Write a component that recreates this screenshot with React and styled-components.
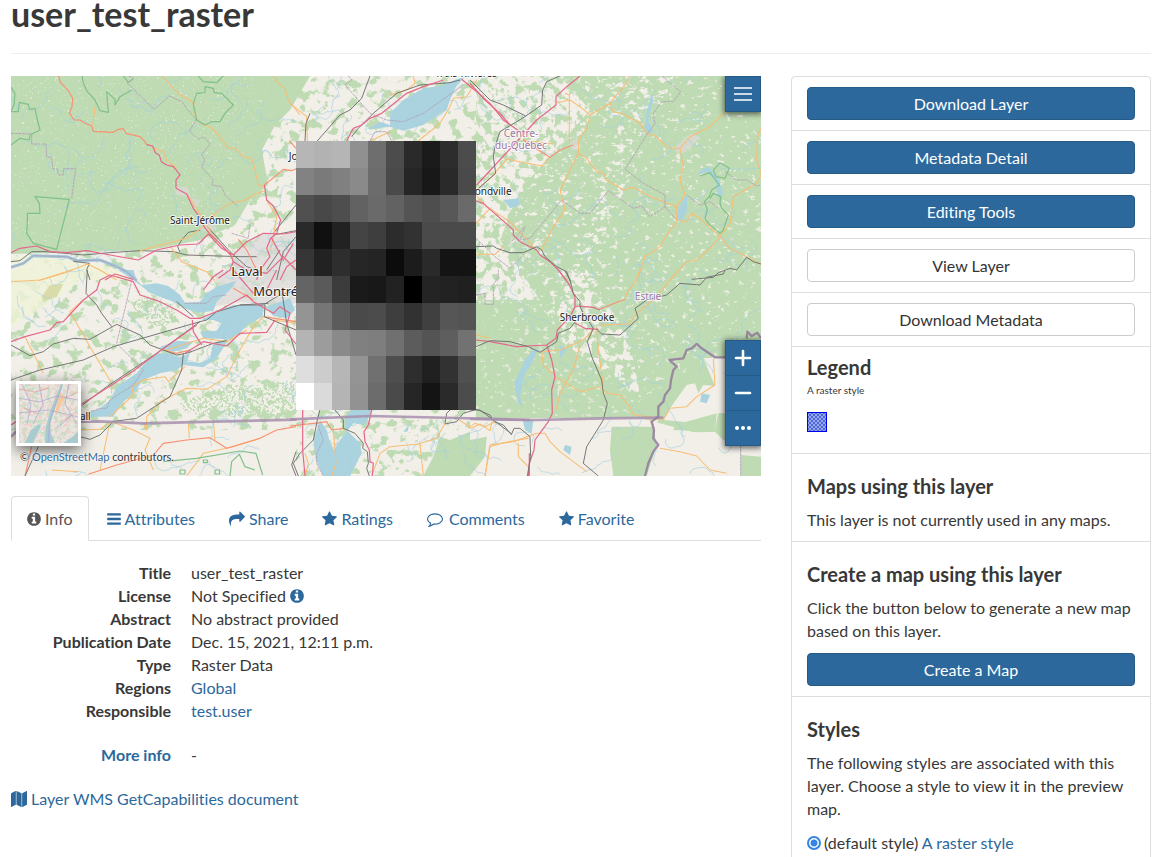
import React from "react";
import styled, { createGlobalStyle, css } from "styled-components";

const GlobalStyle = createGlobalStyle`
  * { box-sizing: border-box; }
  html { overflow: hidden; }
  body {
    margin: 0;
    background: #fff;
    color: #383838;
    font-family: Lato, "Liberation Sans", sans-serif;
    font-size: 16px;
    line-height: 23px;
    font-variant-ligatures: none;
  }
`;

const link = css`
  color: #2c689c;
  text-decoration: none;
  &:hover { text-decoration: underline; }
`;

const Page = styled.div`
  height: 100vh;
  overflow: hidden auto;
  scrollbar-width: none;
  padding: 0 10px 0 11px;
`;

const PageHeader = styled.header`
  height: 54px;
  border-bottom: 1px solid #eee;
  margin-bottom: 22px;
  display: flex;
  align-items: flex-start;
`;

const PageTitle = styled.h2`
  margin: 0;
  font-size: 34px;
  line-height: 28px;
  font-weight: 700;
`;

const Columns = styled.div`
  display: grid;
  grid-template-columns: 25fr 12fr;
  gap: 30px;
  align-items: start;
`;

const Main = styled.main`
  min-width: 0;
`;

/* ---------- Map ---------- */

const MapFrame = styled.section`
  position: relative;
  height: 400px;
  overflow: hidden;
  margin-bottom: 20px;
  background: #f2efe9;
`;

const MapCanvas = styled.svg`
  display: block;
  width: 100%;
  height: 100%;
`;

const MapControls = styled.div`
  position: absolute;
  right: 0;
  top: ${(p) => (p.$top ? "0" : "auto")};
  bottom: ${(p) => (p.$top ? "auto" : "30px")};
  display: flex;
  flex-direction: column;
  box-shadow: 0 1px 6px 1px rgba(0, 0, 0, 0.6);
`;

const MapButton = styled.button`
  width: 36px;
  height: ${(p) => (p.$tall ? "36px" : "35px")};
  padding: 0;
  border: 1px solid #265a87;
  border-bottom-width: ${(p) => (p.$joined ? "0" : "1px")};
  background: #2c689c;
  color: #fff;
  display: grid;
  place-items: center;
  cursor: pointer;
`;

const Overview = styled.button`
  position: absolute;
  left: 5px;
  bottom: 30px;
  width: 65px;
  height: 65px;
  padding: 0;
  border: 3px solid #fff;
  background: #ece4dd;
  box-shadow: 0 4px 14px rgba(0, 0, 0, 0.6);
  cursor: pointer;
  svg { display: block; width: 100%; height: 100%; }
`;

const Attribution = styled.p`
  position: absolute;
  left: 9px;
  bottom: 8px;
  margin: 0;
  font-size: 11px;
  line-height: 22px;
  text-shadow: 0 0 2px #fff, 0 0 2px #fff;
  a { ${link} }
`;

/* ---------- Tabs and details ---------- */

const Tabs = styled.nav`
  display: flex;
  gap: 2px;
  border-bottom: 1px solid #ddd;
  margin-bottom: 20px;
`;

const Tab = styled.a`
  ${link}
  display: flex;
  align-items: center;
  gap: ${(p) => (p.$wide ? "6px" : "4px")};
  padding: 10px 15px;
  border: 1px solid transparent;
  border-radius: 4px 4px 0 0;
  margin-bottom: -1px;
  ${(p) =>
    p.$active &&
    css`
      color: #555;
      background: #fff;
      border-color: #ddd #ddd #fff;
    `}
`;

const Details = styled.dl`
  display: grid;
  grid-template-columns: 160px 1fr;
  column-gap: 20px;
  margin: 0 0 21px;
  dt { font-weight: 700; text-align: right; }
  dd { margin: 0; }
`;

const Anchor = styled.a`
  ${link}
`;

/* ---------- Side panel ---------- */

const Panel = styled.aside`
  border: 1px solid #ddd;
  border-radius: 4px 4px 0 0;
`;

const PanelItem = styled.section`
  padding: 10px 15px;
  border-bottom: 1px solid #ddd;
`;

const PanelTitle = styled.h4`
  margin: ${(p) => (p.$first ? "0 0 2px" : "12px 0")};
  font-size: 20px;
  line-height: 20px;
  font-weight: 700;
`;

const PanelText = styled.p`
  margin: 0 0 ${(p) => (p.$spaced ? "11px" : "0")};
`;

const Button = styled.button`
  display: block;
  width: 100%;
  height: 33px;
  padding: 0 12px;
  border-radius: 4px;
  font: inherit;
  cursor: pointer;
  color: ${(p) => (p.$plain ? "#333" : "#fff")};
  background: ${(p) => (p.$plain ? "#fff" : "#2c689c")};
  border: 1px solid ${(p) => (p.$plain ? "#ccc" : "#265a87")};
`;

const LegendName = styled.p`
  margin: 0 0 10px;
  font-size: 10px;
  line-height: 23px;
`;

const LegendSwatch = styled.svg`
  display: block;
  margin-bottom: 11px;
`;

const StyleChoice = styled.div`
  display: flex;
  align-items: center;
  gap: 3px;
`;

const Radio = styled.input`
  appearance: none;
  width: 14px;
  height: 14px;
  margin: 0;
  border: 2px solid #3584e4;
  border-radius: 50%;
  background: radial-gradient(circle, #3584e4 0 3px, #fff 4px);
`;

/* ---------- Icons ---------- */

const IconSvg = styled.svg`
  flex: none;
  height: 16px;
  vertical-align: -2px;
  fill: currentColor;
`;

const ICONS = {
  info: [128, 1536, 14, "M1152 1376v-160q0-14-9-23t-23-9h-96v-512q0-14-9-23t-23-9h-320q-14 0-23 9t-9 23v160q0 14 9 23t23 9h96v320h-96q-14 0-23 9t-9 23v160q0 14 9 23t23 9h448q14 0 23-9t9-23zm-128-896v-160q0-14-9-23t-23-9h-192q-14 0-23 9t-9 23v160q0 14 9 23t23 9h192q14 0 23-9t9-23zm640 416q0 209-103 385.5t-279.5 279.5-385.5 103-385.5-103-279.5-279.5-103-385.5 103-385.5 279.5-279.5 385.5-103 385.5 103 279.5 279.5 103 385.5z"],
  bars: [128, 1536, 14, "M1664 1344v128q0 26-19 45t-45 19h-1408q-26 0-45-19t-19-45v-128q0-26 19-45t45-19h1408q26 0 45 19t19 45zm0-512v128q0 26-19 45t-45 19h-1408q-26 0-45-19t-19-45v-128q0-26 19-45t45-19h1408q26 0 45 19t19 45zm0-512v128q0 26-19 45t-45 19h-1408q-26 0-45-19t-19-45v-128q0-26 19-45t45-19h1408q26 0 45 19t19 45z"],
  share: [0, 1792, 16, "M1792 640q0 26-19 45l-512 512q-19 19-45 19t-45-19-19-45v-256h-224q-98 0-175.5 6t-154 21.5-133 42.5-105.5 69.5-80 101-48.5 138.5-17.5 181q0 55 5 123 0 6 2.5 23.5t2.5 26.5q0 15-8.5 25t-23.5 10q-16 0-28-17-7-9-13-22t-13.5-30-10.5-24q-127-285-127-451 0-199 53-333 162-403 875-403h224v-256q0-26 19-45t45-19 45 19l512 512q19 19 19 45z"],
  star: [64, 1664, 15, "M1728 647q0 22-26 48l-363 354 86 500q1 7 1 20 0 21-10.5 35.5t-30.5 14.5q-19 0-40-12l-449-236-449 236q-22 12-40 12-21 0-31.5-14.5t-10.5-35.5q0-6 2-20l86-500-364-354q-25-27-25-48 0-37 56-46l502-73 225-455q19-41 49-41t49 41l225 455 502 73q56 9 56 46z"],
  comment: [0, 1792, 16, "M896 384q-204 0-381.5 69.5t-282 187.5-104.5 255q0 112 71.5 213.5t201.5 175.5l87 50-27 96q-24 91-70 172 152-63 275-171l43-38 57 6q69 8 130 8 204 0 381.5-69.5t282-187.5 104.5-255-104.5-255-282-187.5-381.5-69.5zm896 512q0 174-120 321.5t-326 233-450 85.5q-70 0-145-8-198 175-460 242-49 14-114 22h-5q-15 0-27-10.5t-16-27.5v-1q-3-4-.5-12t2-10 4.5-9.5l6-9 7-8.5 8-9q7-8 31-34.5t34.5-38 31-39.5 32.5-51 27-59 26-76q-157-89-247.5-220t-90.5-281q0-174 120-321.5t326-233 450-85.5 450 85.5 326 233 120 321.5z"],
  map: [0, 1792, 16, "M512 0q13 0 22.5 9.5t9.5 22.5v1472q0 20-17 28l-480 256q-7 4-15 4-13 0-22.5-9.5t-9.5-22.5v-1472q0-20 17-28l480-256q7-4 15-4zm1248 0q13 0 22.5 9.5t9.5 22.5v1472q0 20-17 28l-480 256q-7 4-15 4-13 0-22.5-9.5t-9.5-22.5v-1472q0-20 17-28l480-256q7-4 15-4zm-1120 0q8 0 14 3l512 256q18 10 18 29v1472q0 13-9.5 22.5t-22.5 9.5q-8 0-14-3l-512-256q-18-10-18-29v-1472q0-13 9.5-22.5t22.5-9.5z"],
};

function Icon({ name }) {
  const [x, w, width, d] = ICONS[name];
  return (
    <IconSvg width={width} viewBox={`${x} 0 ${w} 1792`} aria-hidden="true">
      <path d={d} />
    </IconSvg>
  );
}

/* ---------- Map drawing ---------- */

const LINE = {
  motorway: ["#e5688a", 3.6],
  trunk: ["#f9906f", 3.4],
  primary: ["#f9bd74", 3.2],
  rail: ["#6f6f6f", 2.8],
  park: ["#80c08a", 3.6],
  admin: ["#b3a0b6", 2.6],
  border: ["#a88fae", 8],
  river: ["#9fc9dc", 9],
  ridge: ["#937b9b", 7],
};

const AREA = { water: "#aad3df", town: "#dcdad8", land: "#f2efe9", forest: "#bedbb3", park: "#dfe9b8" };

/* Each sheet: origin on the map and its features, in thirds of a pixel. */
const SHEETS = [
  [0, 70, [
    ["town", "M700 545L750 520 790 490 840 500 888 480V630H690Z"],
    ["town", "M520 350L560 350 575 385 600 390 590 420 560 380 530 375Z"],
    ["town", "M590 440L640 450 650 480 610 485Z"],
    ["park", "M33 560L110 555 230 572 330 590 400 630H33Z"],
    ["river", "M33 592L70 580 100 557 200 560 230 572 300 570 350 590 380 605 410 632"],
    ["border2", "M33 592L70 580 100 557 200 560 230 572 300 570 350 590 380 605 410 632"],
    ["rail", "M33 575L60 572 95 545 140 545 250 555 330 548 420 542 520 545 560 555 720 560 770 560M600 480L565 487 545 510 533 530 540 547M622 470L690 545 740 590 775 602M820 490L888 405M820 495L888 482M840 540L800 600M270 630L260 600 268 580 220 574M888 500L850 545 830 630"],
    ["primary", "M485 18L540 75 570 90 582 100 580 125 600 160 630 170 655 195 685 235 705 235 730 260 755 265 765 300 775 345 793 350M635 440L650 425 690 400 735 390 760 375 793 362M820 18L835 40 855 55 865 90 900 135M285 110L278 170M455 232L490 245 500 270 530 295M560 370L600 430 640 500 700 565M510 528L545 575 620 605 645 632M115 632L195 608 262 582 300 600 350 630M420 542L500 520 560 505 610 470 645 435M800 390L830 440 820 500 812 540"],
    ["trunk", "M175 18L182 38 205 62 218 85 216 110 208 128 222 150 240 150 255 160 275 168 280 184 340 187 355 178 370 176 378 190 420 200 432 212 440 224M793 345L825 320 850 298 875 302 888 296M868 212L888 235M715 508L740 540 770 600"],
    ["motorway", "M440 224L458 228 466 248 478 256 484 275 500 285 520 290 540 315 528 330 528 355 560 372 580 415 598 440 612 470 628 490 660 520 692 555 700 575 690 600 655 625M33 548L60 535 110 528 150 545 200 548 260 542 330 555 415 570 470 540 540 525 595 522 625 492M793 345L800 390 820 408 842 450 830 490 812 505 800 535 810 560 780 600 770 630M625 492L665 535 700 555 740 515 790 490 850 492 888 485M700 575L740 600 800 610 850 560 888 600M815 505L850 570 880 520M315 630L345 612 400 628M840 630L860 590 888 570"],
    ["park2", "M246 18L250 40 262 65 285 90 300 122 325 127 320 65 345 88 345 105 360 80 395 60M370 18L385 38 400 25M33 52L45 70 42 105 33 125 55 125 58 97 85 103 88 118 105 115 112 150 120 180 90 195 88 210 60 205 33 225M105 380L208 388 170 538 100 520 80 490 82 460 82 430 120 430 118 400ZM580 100L590 70 615 68 615 50 640 55 643 68 665 70 700 105 675 130 660 155 635 155 615 165 590 150ZM595 18L610 35 650 38 670 18"],
    ["admin", "M385 18L400 25 382 40 463 118 508 78 545 95 588 150 568 183 595 208 612 200 630 222 605 255 615 270 605 290 640 330 635 345 665 350 675 375 715 410M33 190L95 192 95 222 138 222 140 260 155 262 158 295 172 297 175 315 190 315 190 296 227 296 215 385M695 490L745 505 750 460"],
  ]],
  [290, 70, [
    ["water", "M300 130L340 90 400 55 450 48 500 28 525 20 498 50 480 90 470 120 430 145 400 165 340 182 300 170 230 178 270 155 300 165Z"],
    ["primary", "M0 100L50 140 52 213M385 213L450 160 480 110 490 85 530 80 560 30M370 18L375 40 350 60 300 75M240 213L300 185"],
    ["rail", "M240 18L215 85 180 120 150 135 80 215M185 200L205 175 250 130 320 70 390 45 480 38 510 30M60 130L48 160 45 213"],
    ["motorway", "M170 213L190 175 215 165 240 145 275 130 350 70 400 50 460 30M515 28L560 65 600 100 640 150 690 185"],
    ["admin", "M175 18L185 30 165 45 240 130 290 150 340 155 400 130 520 45M240 213L255 185 290 185 305 213"],
  ]],
  [470, 70, [
    ["town", "M620 225L665 190 690 200 660 235 640 250 615 245ZM300 215L325 205 325 240 305 240Z"],
    ["water", "M680 315L700 295 715 290 745 325 758 365 752 400 742 370 735 330 710 305ZM620 450L625 415 645 380 652 380 650 425 632 455ZM525 170L530 130 545 70 550 90 535 150 550 185 532 195ZM100 390L145 385 150 405 120 415Z"],
    ["primary", "M260 98L300 90 330 110 360 135 420 100 435 80 470 40 475 18M420 100L430 125 460 132 510 160 530 190 555 198 600 235 630 235 660 200 720 170 765 125M360 135L350 175 325 210 325 250 300 300 270 360 285 420 250 470 215 540M285 70L298 75V220M325 250L350 265 380 305 400 310 410 330 460 360 490 352 540 380 620 410M630 235L640 290 630 330 645 375 620 410 620 450 650 455 665 430 690 445 750 500 780 535 830 560 873 583M620 455L590 495 570 530 525 560 500 632M600 630L650 575 680 570 730 525 750 500 780 460 790 380 860 340 873 315M873 175L862 200 860 270 873 310M20 360L60 325 110 268 150 275 215 288 240 262M20 378L50 410 120 455 190 530M18 553L75 553 100 530M18 460L60 415M160 210L250 222"],
    ["trunk", "M160 210L205 240 240 262 270 240 310 225"],
    ["motorway", "M330 18L290 50 258 80 258 105 200 150 20 345M0 40L45 90 90 130 120 165M18 393L40 400 130 480 130 495 150 515 200 540 210 555 240 575 265 600 290 632"],
    ["rail", "M0 30L60 90 100 105 165 137M270 18L230 35 218 60 215 105 165 140 90 185 75 230 70 260 77 310 20 360M18 530L70 528 80 535 120 548 160 548 200 530 215 540 225 560 260 590 290 605 300 632M665 628L730 622 745 608 780 595 800 600 830 562 850 575 873 582"],
    ["park2", "M735 295L750 278 778 295 765 325 738 320 730 300ZM690 318L720 308 748 345 725 360 718 380 703 395 712 420 705 445 715 460 750 490 760 480 775 435 755 415 750 400 752 380 730 370 720 385"],
    ["admin", "M575 18L632 65 610 95 575 95 550 130 555 160 530 195 465 298 520 340 585 375 585 410 540 440 515 408 490 415 415 362 360 430 330 430 275 390 180 505 150 510 165 470 120 520M585 410L620 450M650 375L690 405 720 395 745 415M765 305L800 330 830 330 860 348 873 345M18 505L75 560 120 595 155 560"],
  ]],
  [0, 270, [
    ["park", "M33 0H260L230 40 150 100 80 140 33 175Z"],
    ["olive", "M125 80L150 45 190 42 170 80 130 95Z"],
    ["town", "M640 10L700 0H888V100L790 105 720 95 640 110 660 60Z"],
    ["water", "M355 0H400L410 30 425 45 470 40 505 48 540 75 555 98 600 95 620 70 650 50 710 32 690 60 650 95 640 122 600 128 560 118 520 95 450 68 400 30ZM605 150L640 130 700 105 790 105 788 140 740 165 720 190 690 208 610 205 600 185 650 182 665 160 640 150ZM570 250L540 262 500 250 470 250 430 285 410 310 350 350 330 390 300 415 240 440H340L365 400 400 370 430 330 480 310 530 300 550 285 610 292 650 265 685 210 640 220 630 265 600 278 560 275ZM478 232L530 212 580 215 560 235 520 245ZM798 110L870 85 885 120 860 145 820 138Z"],
    ["green", "M600 375L700 345 800 345 888 330V440L620 440 555 425 540 400ZM430 75L520 105 530 150 480 175 430 150 395 105Z"],
    ["primary", "M75 200L130 310M250 90L210 125 270 230 335 340 335 370M330 440L400 375 395 350 430 330 495 320 505 335 555 290M335 455L400 480 450 505 435 540 460 600M430 460L440 480 440 440 470 410 480 395 560 355 620 358 680 320 720 240 760 170 790 140M33 35L120 30 215 0M640 450L645 510M245 480L300 478 330 455 300 600M155 600L235 605M565 460L568 505M560 618L610 550 700 530 780 505M820 150L888 160M500 240L610 205 680 215 740 180"],
    ["trunk", "M265 613L350 585 460 555 490 520 560 510 630 503 680 535 780 505 830 480 888 470M490 240L530 250 570 240M700 55L760 90M95 530L75 618M790 140L888 155"],
    ["rail", "M33 330L120 300 250 270 340 230 600 155 620 150 650 125 720 105 790 105 830 80 888 60M245 407L320 350 470 250 600 155M33 225L90 257 130 245 160 222 220 205 270 208 350 163 420 195 450 225 530 255 560 250 640 220 680 212M262 0L258 70 290 105 305 130 335 170M335 460L300 495 270 508 240 500M335 455L410 445 510 380 545 300 550 250M530 95L580 140M795 105L793 140 888 180M845 60L860 160 888 255M115 530L75 618M720 105L805 100M888 545L875 585 888 618M830 618"],
    ["motorway", "M33 215L75 200 150 180 170 158 190 155 250 90 290 60 300 30 330 15 400 35 420 75 480 95 530 120 570 145 600 145 660 120 740 75 760 95M245 403L330 348 400 303 480 243 590 165M577 150L580 185 605 225M555 250L610 215 680 228 720 190 800 187 825 150M610 60L640 20 670 0M888 222L855 180 870 130 840 110 820 130 760 95M700 0L760 70 800 60 830 0M33 465L48 455"],
    ["park2", "M490 575L590 565 720 543 768 550 788 615M690 618L695 575 718 553 735 590 765 600M540 600h15v12h-15ZM610 570h12v8h-12ZM645 600h14v12h-14Z"],
    ["admin", "M398 20L350 220 430 300 400 345 345 380 330 390 320 415 300 415 245 435M555 100L620 100 640 80 680 75"],
    ["border", "M33 500L60 475M240 455L300 454 430 460 890 449"],
  ]],
  [290, 400, [
    ["water", "M90 60L70 120 78 180 100 228H180L215 160 210 130 185 105 165 85 165 50 185 30H245L225 75 190 70 150 120 132 150 118 120 110 90ZM340 95L360 70 352 95Z"],
    ["forest", "M400 228L430 170 450 110 480 120 540 95 600 100 580 180 585 228Z"],
    ["primary", "M130 90L138 190 125 228M245 228L270 160 300 140 385 132 440 115 465 70M390 130L395 180 400 228M508 60L545 85 570 72 600 92 606 65M585 228L600 140 640 128 715 115M45 160L55 190 45 228"],
    ["trunk", "M0 78L90 68 110 65 125 90 160 85"],
    ["rail", "M90 28L82 60 70 120 30 160 10 190 25 228M135 30L160 60 160 85 195 100 220 130 218 145 232 155 235 190 230 205 238 228M465 70L470 40 480 30M465 72L500 65 520 40 560 28 600 45 612 65 640 75 665 105"],
    ["motorway", "M38 30V150L45 228M245 30L235 75 222 95 225 125 238 150 240 185 250 190 247 228M718 160V228"],
    ["admin", "M80 65L100 120 80 160 80 190 100 228"],
    ["border", "M0 58L240 48 500 54 720 60"],
  ]],
  [470, 270, [
    ["land", "M0 450H565L550 480 565 530 530 618H0ZM580 450L600 415 650 345 675 340 685 370 700 345 735 348 700 265 765 262V430L745 430 735 480 640 455ZM570 490L735 485 770 520 873 525V618H530Z"],
    ["forest", "M425 470L550 470 560 525 530 618H430L420 540ZM0 510L50 500 45 560 0 618ZM615 465L740 430 735 485 610 480ZM812 555L873 560V618H812Z"],
    ["water", "M205 230L190 270 160 320 150 380 158 410 145 400 133 340 165 270 190 240ZM158 450H190L185 490 165 480ZM270 225L290 240 270 265ZM285 525L305 530 300 555 280 540ZM695 370L720 375 710 400 690 395Z"],
    ["primary", "M465 88L470 70 500 30 510 0M390 165L475 162 500 130 560 80 625 0M380 170L385 240 400 350M215 245L270 240 340 210 370 180M255 320L330 365 390 350 410 370 450 375 480 410 490 435 540 440 580 450 600 415 650 410 680 380 735 345 730 265M330 225L310 300 270 370 258 420M215 245L220 285 250 310M0 470L15 460 45 470 75 455M45 618L60 525 130 515 200 490 225 490 240 515 270 545 350 605M145 520L145 560 175 590M570 535L630 545 680 558 720 600 770 610M18 195L60 205M540 450L552 475"],
    ["trunk", "M390 118L420 105 465 88"],
    ["motorway", "M265 0L295 40 315 80 315 110 300 140 262 180 258 205 230 225 140 230 60 215 18 210M230 225L245 270 255 320 245 360 247 430 235 455 195 510 192 540 178 580 175 618M315 108L345 110 370 112 390 120M315 160L345 175 385 178"],
    ["rail", "M283 0L300 30 310 70 330 95 330 110 340 130 370 175 352 215 365 260 395 330 400 370 412 400 400 450 350 530 340 580 385 618M380 178L395 192 450 195 505 145 495 115 530 90 590 75 630 40 690 45 710 22 760 12 765 0M18 230L60 212 120 215 175 230 210 247 260 215 265 190 300 175 320 150M0 420L30 420 70 450 125 492 132 475 150 475 180 500 182 560 172 618"],
    ["admin", "M18 75L45 70 45 103 70 103 70 45 85 20 85 0M812 527V618"],
    ["border", "M0 447L200 450 400 445 580 443"],
    ["ridge", "M525 618L535 580 550 545 565 525 550 505 552 480 545 455 565 440 565 410 580 395 585 375 600 355 603 330 610 300 620 290 598 270 640 265 650 240 665 235 680 222 695 235 735 262 765 262M830 205L832 185 845 198 862 188 873 205"],
  ]],
];

const RASTER = [
  [182, 178, 181, 144, 110, 76, 42, 27, 45, 76],
  [130, 122, 128, 138, 108, 74, 38, 24, 42, 74],
  [80, 72, 78, 98, 106, 98, 84, 78, 88, 106],
  [42, 16, 34, 68, 62, 44, 50, 74, 74, 74],
  [54, 34, 46, 38, 36, 12, 28, 42, 20, 20],
  [100, 90, 60, 26, 24, 34, 0, 36, 34, 32],
  [148, 118, 92, 74, 76, 62, 50, 64, 86, 84],
  [180, 156, 138, 128, 126, 112, 92, 84, 94, 114],
  [222, 204, 182, 148, 112, 78, 46, 32, 50, 80],
  [255, 218, 180, 146, 108, 74, 38, 20, 42, 76],
];

const ROW_EDGES = [141, 168, 195, 222, 249, 276, 303, 330, 356, 383, 410];

const LABELS = [
  ["Saint-Jérôme", 200, 224, 10],
  ["Laval", 247, 276, 13],
  ["Montréal", 281, 296, 13],
  ["Joliette", 305, 160, 10],
  ["Drummondville", 475, 195, 10],
  ["Trois-Rivières", 466, 77, 10],
  ["Sherbrooke", 587, 321, 10],
  ["Cornwall", 70, 420, 10],
  ["Centre-", 521, 137, 10, true],
  ["du-Québec", 521, 149, 10, true],
  ["Estrie", 648, 300, 10, true],
];

/* Small meandering brooks, repeatable from one seed. */
function brooks(count) {
  let seed = 41;
  const rnd = () => {
    seed = (seed * 16807) % 2147483647;
    return seed / 2147483647;
  };
  let d = "";
  for (let i = 0; i < count; i++) {
    let x = 11 + rnd() * 750;
    let y = 76 + rnd() * 400;
    let a = rnd() * 6.28;
    d += `M${x.toFixed(1)} ${y.toFixed(1)}`;
    const steps = 6 + Math.floor(rnd() * 14);
    for (let s = 0; s < steps; s++) {
      a += (rnd() - 0.5) * 1.7;
      x += Math.cos(a) * 3;
      y += Math.sin(a) * 3;
      d += `L${x.toFixed(1)} ${y.toFixed(1)}`;
    }
  }
  return d;
}

const BROOKS = brooks(300);

function Speckle({ id, freq, cut, seed }) {
  return (
    <filter id={id} x="0" y="0" width="100%" height="100%" colorInterpolationFilters="sRGB">
      <feTurbulence type="fractalNoise" baseFrequency={freq} numOctaves="4" seed={seed} />
      <feColorMatrix values={`0 0 0 0 0  0 0 0 0 0  0 0 0 0 0  0 0 0 10 ${-10 * cut}`} />
      <feComposite in="SourceGraphic" operator="in" />
    </filter>
  );
}

const BELOW = ["water", "town", "land", "forest", "park", "olive", "green"];

function Feature({ kind, d }) {
  if (kind === "green") return <path d={d} fill={AREA.forest} filter="url(#mixed)" />;
  if (kind === "olive") return <path d={d} fill="#d9dca8" />;
  if (kind === "park") return <path d={d} fill="#f0f2d8" opacity="0.8" />;
  if (kind === "town") return <path d={d} fill={AREA.town} opacity="0.7" />;
  if (AREA[kind]) return <path d={d} fill={AREA[kind]} />;
  const [stroke, width] = LINE[kind === "park2" ? "park" : kind === "border2" ? "admin" : kind];
  return (
    <path
      d={d}
      fill="none"
      stroke={stroke}
      strokeWidth={width}
      strokeLinejoin="round"
      strokeDasharray={kind === "admin" ? "9 2" : undefined}
      opacity={kind === "border" || kind === "ridge" ? 0.85 : 1}
    />
  );
}

function Sheets({ areas }) {
  return SHEETS.map(([x, y, features]) => (
    <g key={`${x}-${y}`} transform={`translate(${x} ${y}) scale(0.33333)`}>
      {features
        .filter(([kind]) => BELOW.includes(kind) === areas)
        .map(([kind, d]) => (
          <Feature key={kind + d.slice(0, 12)} kind={kind} d={d} />
        ))}
    </g>
  ));
}

const LOWLAND = "M310 76L290 110 275 125 262 150 268 185 250 200 235 225 200 240 150 250 11 254V476H761V450L640 418H476V320L540 300 500 240 520 190 590 110 560 76Z";
const LAURENTIANS = "M11 76H275L262 110 240 170 225 205 190 238 11 250Z";

function LayerMap() {
  return (
    <MapCanvas viewBox="11 76 750 400" preserveAspectRatio="xMidYMid slice" role="img" aria-label="Layer preview map">
      <defs>
        <Speckle id="sparse" freq="0.4" cut={0.69} seed={3} />
        <Speckle id="mixed" freq="0.13" cut={0.5} seed={8} />
        <Speckle id="clumps" freq="0.1" cut={0.55} seed={12} />
        <Speckle id="fields" freq="0.12 0.18" cut={0.58} seed={5} />
        <Speckle id="clearings" freq="0.16 0.22" cut={0.64} seed={9} />
      </defs>
      <rect x="11" y="76" width="750" height="400" fill={AREA.forest} />
      <path d="M476 76H680L640 140 620 200 590 300 520 330H476Z" fill={AREA.land} filter="url(#fields)" />
      <path d="M476 76H761V330L640 400 476 410Z" fill={AREA.land} filter="url(#clearings)" opacity="0.85" />
      <path d="M555 265L590 275 630 340 640 395 590 415 560 380Z" fill={AREA.land} filter="url(#mixed)" />
      <path d={LOWLAND} fill={AREA.land} />
      <path d="M476 76H600L620 140 560 300 476 330Z" fill={AREA.forest} filter="url(#mixed)" />
      <path d="M476 300H540L560 340 640 400V417H476Z" fill={AREA.forest} />
      <path d="M476 300H540L560 340 640 400V417H476Z" fill={AREA.land} filter="url(#clearings)" opacity="0.7" />
      <path d="M11 76H480V430H11Z" fill={AREA.forest} filter="url(#clumps)" />
      <path d="M296 420H440V476H296Z" fill={AREA.forest} filter="url(#clumps)" />
      <path d={LAURENTIANS} fill={AREA.forest} />
      <path d={LAURENTIANS} fill={AREA.land} filter="url(#sparse)" opacity="0.7" />
      <Sheets areas />
      <path d={BROOKS} fill="none" stroke="#a3cfdf" strokeWidth="0.8" opacity="0.8" />
      <Sheets areas={false} />
      <g fontFamily='"Noto Sans", sans-serif' textAnchor="middle" stroke="#fff" strokeOpacity="0.75" strokeWidth="2" paintOrder="stroke">
        {LABELS.map(([text, x, y, size, region]) => (
          <text key={text} x={x} y={y} fontSize={size} fill={region ? "#a277a4" : "#222"}>
            {text}
          </text>
        ))}
      </g>
      <g shapeRendering="crispEdges">
        {RASTER.map((row, r) =>
          row.map((v, c) => (
            <rect
              key={`${r}-${c}`}
              x={296 + c * 18}
              y={ROW_EDGES[r]}
              width="18"
              height={ROW_EDGES[r + 1] - ROW_EDGES[r]}
              fill={`rgb(${v},${v},${v})`}
            />
          ))
        )}
      </g>
    </MapCanvas>
  );
}

function OverviewMap() {
  return (
    <svg viewBox="0 0 59 59" aria-hidden="true">
      <defs>
        <Speckle id="blocks" freq="0.25" cut={0.5} seed={4} />
        <Speckle id="blocks2" freq="0.3" cut={0.56} seed={17} />
      </defs>
      <rect width="59" height="59" fill="#eae4e0" />
      <rect width="59" height="59" fill="#bcdcbc" filter="url(#blocks)" opacity="0.7" />
      <rect width="59" height="59" fill="#f0cfc8" filter="url(#blocks2)" />
      <path d="M6 59L12 46 20 40 22 42 18 50 14 59ZM26 59L27 42 33 22 42 0H44L35 28 31 40 32 50 36 59ZM44 59L52 54 59 48V59Z" fill="#a8cbd0" />
      <path d="M41 9L46 12 40 26 36 31 38 18Z" fill="#f7c7a0" />
      <path d="M0 14L20 18 38 12 59 16M3 0L12 20 8 40M20 0L24 20 14 40M0 29L30 26 59 33M50 0L46 20 58 40M38 44L52 32M29 59L31 36 43 2" fill="none" stroke="#a9a5d0" strokeWidth="1" opacity="0.7" />
      <path d="M0 5L16 8 30 4M5 24L20 30M42 38L57 28M46 14L59 8" fill="none" stroke="#e89a9a" strokeWidth="1" opacity="0.7" />
    </svg>
  );
}

/* ---------- Page ---------- */

const TABS = [
  ["info", "Info"],
  ["bars", "Attributes"],
  ["share", "Share"],
  ["star", "Ratings"],
  ["comment", "Comments"],
  ["star", "Favorite"],
];

const ACTIONS = [
  ["Download Layer", false],
  ["Metadata Detail", false],
  ["Editing Tools", false],
  ["View Layer", true],
  ["Download Metadata", true],
];

const Spacer = styled.div`
  grid-column: 1 / -1;
  height: 21px;
`;

export default function App() {
  return (
    <>
      <GlobalStyle />
      <Page>
        <PageHeader>
          <PageTitle>user_test_raster</PageTitle>
        </PageHeader>
        <Columns>
          <Main>
            <MapFrame>
              <LayerMap />
              <Overview type="button" aria-label="Base maps">
                <OverviewMap />
              </Overview>
              <Attribution>
                © <a href="#osm">OpenStreetMap</a> contributors.
              </Attribution>
              <MapControls $top>
                <MapButton $tall type="button" aria-label="Menu">
                  <svg width="18" height="14" viewBox="0 0 18 14" stroke="#fff" strokeWidth="1.5" aria-hidden="true">
                    <path d="M0 1H18M0 7H18M0 13H18" />
                  </svg>
                </MapButton>
              </MapControls>
              <MapControls>
                <MapButton $joined type="button" aria-label="Zoom in">
                  <svg width="18" height="18" viewBox="0 0 18 18" stroke="#fff" strokeWidth="2.6" strokeLinecap="round" aria-hidden="true">
                    <path d="M2 9H16M9 2V16" />
                  </svg>
                </MapButton>
                <MapButton $joined type="button" aria-label="Zoom out">
                  <svg width="18" height="18" viewBox="0 0 18 18" stroke="#fff" strokeWidth="2.6" strokeLinecap="round" aria-hidden="true">
                    <path d="M2 9H16" />
                  </svg>
                </MapButton>
                <MapButton $tall type="button" aria-label="More tools">
                  <svg width="18" height="6" viewBox="0 0 18 6" fill="#fff" aria-hidden="true">
                    <circle cx="3" cy="3" r="2" />
                    <circle cx="9" cy="3" r="2" />
                    <circle cx="15" cy="3" r="2" />
                  </svg>
                </MapButton>
              </MapControls>
            </MapFrame>

            <Tabs>
              {TABS.map(([icon, label], i) => (
                <Tab key={label} href={`#${label.toLowerCase()}`} $active={i === 0} $wide={icon === "comment"}>
                  <Icon name={icon} />
                  {label}
                </Tab>
              ))}
            </Tabs>

            <Details>
              <dt>Title</dt>
              <dd>user_test_raster</dd>
              <dt>License</dt>
              <dd>
                Not Specified{" "}
                <Anchor href="#license" aria-label="License details">
                  <Icon name="info" />
                </Anchor>
              </dd>
              <dt>Abstract</dt>
              <dd>No abstract provided</dd>
              <dt>Publication Date</dt>
              <dd>Dec. 15, 2021, 12:11 p.m.</dd>
              <dt>Type</dt>
              <dd>Raster Data</dd>
              <dt>Regions</dt>
              <dd>
                <Anchor href="#global">Global</Anchor>
              </dd>
              <dt>Responsible</dt>
              <dd>
                <Anchor href="#user">test.user</Anchor>
              </dd>
              <Spacer />
              <dt>
                <Anchor href="#more">More info</Anchor>
              </dt>
              <dd>-</dd>
            </Details>

            <Anchor href="#wms">
              <Icon name="map" /> Layer WMS GetCapabilities document
            </Anchor>
          </Main>

          <Panel>
            {ACTIONS.map(([label, plain]) => (
              <PanelItem key={label}>
                <Button type="button" $plain={plain}>
                  {label}
                </Button>
              </PanelItem>
            ))}
            <PanelItem>
              <PanelTitle $first>Legend</PanelTitle>
              <LegendName>A raster style</LegendName>
              <LegendSwatch width="20" height="20" viewBox="0 0 20 20" shapeRendering="crispEdges" role="img" aria-label="Raster style symbol">
                <defs>
                  <pattern id="checks" width="4" height="4" patternUnits="userSpaceOnUse">
                    <rect width="4" height="4" fill="#93a9e8" />
                    <path d="M0 0H2V2H0ZM2 2H4V4H2Z" fill="#4f66dc" />
                  </pattern>
                </defs>
                <rect width="20" height="20" fill="#0000f0" />
                <rect x="1" y="1" width="18" height="18" fill="url(#checks)" />
              </LegendSwatch>
            </PanelItem>
            <PanelItem>
              <PanelTitle>Maps using this layer</PanelTitle>
              <PanelText>This layer is not currently used in any maps.</PanelText>
            </PanelItem>
            <PanelItem>
              <PanelTitle>Create a map using this layer</PanelTitle>
              <PanelText $spaced>Click the button below to generate a new map based on this layer.</PanelText>
              <Button type="button">Create a Map</Button>
            </PanelItem>
            <PanelItem>
              <PanelTitle>Styles</PanelTitle>
              <PanelText $spaced>
                The following styles are associated with this layer. Choose a style to view it in the preview map.
              </PanelText>
              <StyleChoice>
                <Radio type="radio" id="default-style" name="style" defaultChecked />
                <label htmlFor="default-style">
                  (default style) <Anchor href="#raster-style">A raster style</Anchor>
                </label>
              </StyleChoice>
            </PanelItem>
          </Panel>
        </Columns>
      </Page>
    </>
  );
}
